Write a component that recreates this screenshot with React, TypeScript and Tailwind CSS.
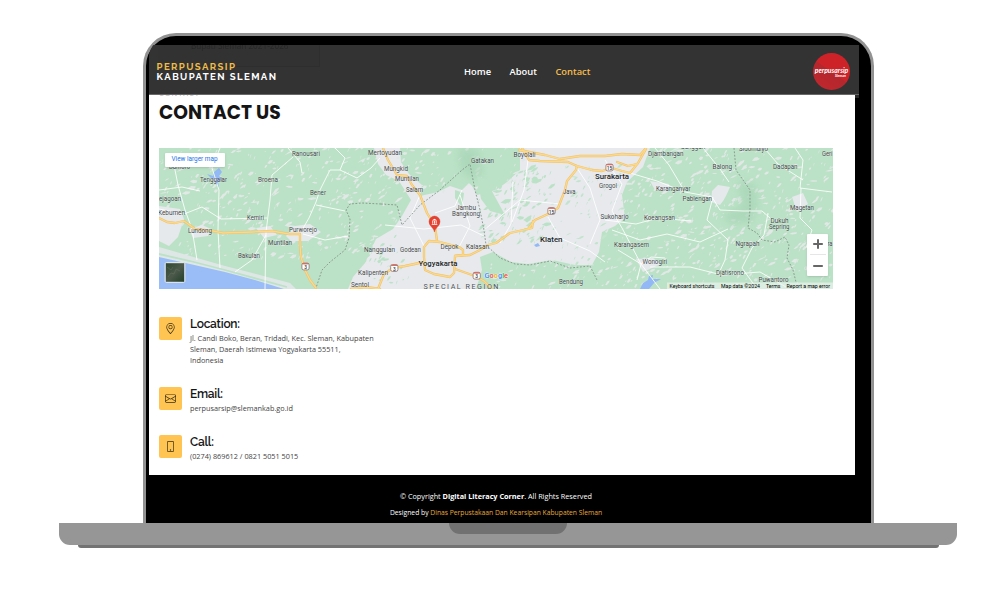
import type { ReactNode } from "react";
import { BsEnvelope, BsGeoAlt, BsPhone } from "react-icons/bs";

type Label = [text: string, x: number, y: number, width: number];

const labels: Label[] = [
  ["Ranousari", 292, 156, 28], ["Mertoyudan", 368, 155, 34], ["Danforo", 169, 169, 21],
  ["Tenggalar", 200, 182, 27], ["Broena", 258, 181.5, 20], ["Bener", 310, 194.5, 16],
  ["ejagoan", 159, 201, 22], ["Kebumen", 158, 215, 27], ["Kemiri", 247, 220, 17],
  ["Lundong", 188, 233, 24], ["Purworejo", 289, 231.5, 28], ["Muntilan", 268, 245, 24],
  ["Bakulan", 238, 258, 22], ["Nanggulan", 364, 252, 31], ["Kalipenten", 358, 275, 30],
  ["Sentol", 351, 287, 18], ["Mungkid", 384, 170.5, 24], ["Muntilan", 395, 180.5, 24],
  ["Salam", 406, 191.5, 17], ["Gatakan", 471, 162.5, 23], ["Jambu", 456, 210, 20],
  ["Bangkong", 452, 216, 28], ["Godean", 400, 252, 21], ["Depok", 440.5, 249, 18],
  ["Kalasan", 466, 249, 23], ["Bendung", 559, 284, 24], ["Boyolali", 513.5, 156.5, 22],
  ["Java", 563, 193.5, 12.5], ["Grogol", 599, 188, 18], ["Sukoharjo", 600.5, 219, 28],
  ["Djambangan", 648, 156, 35.5], ["Sanggan", 681, 149, 24], ["Sidomulyo", 739, 150.5, 29],
  ["Balong", 712.5, 169, 19.5], ["Dadapan", 773, 169, 24.5], ["Geri", 822, 156, 10.5],
  ["Karanganyar", 656, 191, 34.5], ["Pablengan", 682.5, 201, 29.5], ["Koeangsan", 644, 220, 31],
  ["Magetan", 790, 209.5, 24], ["Dukuh", 770.5, 222.5, 18], ["Sepring", 769, 229, 20.5],
  ["Karangasem", 614, 247, 35], ["Ngrapah", 735.5, 246, 24], ["ra", 827.5, 246, 5],
  ["Wonogiri", 642.5, 264, 24.5], ["Djatisrono", 716, 275, 28], ["Puwantoro", 758.5, 281.5, 30],
];

function seeded(seed: number) {
  let s = seed;
  return () => {
    s = (s * 16807) % 2147483647;
    return s / 2147483647;
  };
}

function speckles(seed: number, count: number, x: number, y: number, w: number, h: number, size: number) {
  const r = seeded(seed);
  let d = "";
  for (let i = 0; i < count; i++) {
    const cx = x + r() * w;
    const cy = y + r() * h;
    const a = size * (0.3 + r() * r() * 2.2);
    const b = size * (0.2 + r() * 0.7);
    const k = r() - 0.3;
    d += `M${cx.toFixed(1)} ${cy.toFixed(1)}l${(a * 0.5).toFixed(1)} ${(-b * 0.9 - a * k * 0.5).toFixed(1)} ${(a * 0.6).toFixed(1)} ${(-a * k * 0.4).toFixed(1)} ${(-b * 0.3).toFixed(1)} ${(b * 0.8).toFixed(1)} ${(-a * 0.5).toFixed(1)} ${(b * 0.5 + a * k * 0.4).toFixed(1)}z`;
  }
  return d;
}

const towns = speckles(77, 420, 159, 148, 240, 112, 3.6);
const eastTowns = speckles(913, 560, 600, 148, 232, 141, 3.6);
const northTowns = speckles(421, 90, 385, 148, 150, 45, 3.4);
const southTowns = speckles(55, 50, 490, 262, 110, 27, 3.2);
const woods = speckles(333, 150, 478, 170, 75, 75, 4);
const westWoods = speckles(654, 55, 350, 225, 60, 60, 3.4);
const eastWoods = speckles(871, 70, 560, 165, 62, 100, 3.4);

const highways = [
  "M159 218L167 222 175 223 184 221 195 229 213 231 223 233 252 232 272 231 289 234 300 234 300 245 301 257 305 270 310 280 316 288",
  "M383 148L388 160 397 175 407 176 412 185 420 195 427 213 435 226 437 241",
  "M424 257L424 247 429 241 440 242 459 247 463 250 463 255 455 256 454 273 450 277 434 274 425 270 424 257",
  "M455 256L470 255 480 250 488 245 496 243 510 233 528 229 535 220 548 214 558 208 565 190 567 181 576 170 577 166 568 162 540 161 529 160 522 148",
  "M528 229L532 228 533 221",
  "M424 262L405 266 393 268 384 274 378 289",
  "M455 269L475 276 484 281 492 289",
  "M519 150L545 155 560 159 580 156 605 156 622 154 640 155 646 148",
  "M577 166L592 170 602 171 612 168 622 171 630 173 638 163 646 149",
  "M617 162L628 166 637 164",
  "M351 289L366 287 380 289",
];

const roads =
  "M293 157L272 175 270 200 266 232 265 289M288 148L300 162 302 173M335 148L345 158 340 170 330 170 320 190 316 202 309 218 302 230M340 170L357 178 371 168 380 158M316 205L345 211M303 234L325 240 348 236M220 148L212 168 219 190 218 230 220 268M174 165L178 185 185 210 192 229 197 260M159 209L184 214 202 207 221 219 267 218M266 235L252 260 235 272M159 190L182 187 200 191M435 213L455 206 462 190M420 195L410 218 424 246M385 225L424 229 461 225 484 236M460 195L470 226 459 247M484 230L520 200 560 204M500 243L511 224 513 182M528 160L524 190 512 222M548 217L560 238 590 251 605 262M577 168L590 188 600 220 590 244M605 160L622 184 612 211 622 228 641 264 660 289M630 173L657 181 685 192 712 197 720 210 743 211 762 211 770 218M655 148L669 165 685 192M703 148L720 169 729 182M795 148L803 160 800 188 832 192M801 188L800 218 812 230 806 248M641 264L637 280M650 267L690 267 722 275 760 272 786 287M755 286L742 268 752 248 764 235 768 213M612 230L640 240 667 234 700 242 728 229M618 250L641 264 651 257 665 258M605 220L636 224 658 218 691 221M765 149L778 164 803 180M713 197L707 220 728 240 725 260 718 275";

const borders = [
  "M381 204L362 203 350 204 346 210 350 219 349 238 345 250 330 262 322 270 316 288",
  "M381 204L397 205 402 225 420 205 440 190 462 170 470 164 475 190 480 210 484 230 486 245 500 258 515 264 530 265 550 261 570 268 590 266 597 280",
  "M734 148L736 170 750 190 750 210 748 228 757 233 762 240 775 242 785 237 789 245 787 258 793 270 796 282",
];

function Shield({ x, y, text }: { x: number; y: number; text: string }) {
  return (
    <g>
      <rect x={x - 3.6} y={y - 3.4} width="7.2" height="6.8" rx="1.8" fill="#fff" stroke="#8b6d69" strokeWidth=".8" />
      <path d={`M${x - 3} ${y - 2.7}h6`} stroke="#dc5548" strokeWidth="1.1" />
      <text x={x} y={y + 2.6} textAnchor="middle" fontSize="4.8" fontWeight="500" fill="#333">{text}</text>
    </g>
  );
}

function MapDrawing() {
  return (
    <svg viewBox="159 148 674 141" className="block h-full w-full font-['Roboto',sans-serif]">
      <defs>
        <filter id="soft" x="-20%" y="-20%" width="140%" height="140%">
          <feGaussianBlur stdDeviation="4" />
        </filter>
        <linearGradient id="sat" x1="0" y1="0" x2="1" y2="1">
          <stop offset="0" stopColor="#2c4630" />
          <stop offset=".5" stopColor="#4c594b" />
          <stop offset="1" stopColor="#203e27" />
        </linearGradient>
      </defs>
      <rect x="159" y="148" width="674" height="141" fill="#bbe2c6" />
      <path d={towns} fill="#e1e8e6" />
      <path d={eastTowns} fill="#e1e8e6" />
      <path d="M374 148L400 148 401 162 409 174 422 185 420 196 438 192 450 186 462 190 470 182 477 195 496 190 507 182 520 170 520 148 650 148 643 167 627 182 622 195 625 218 615 226 602 232 599 252 592 265 575 265 552 260 528 264 511 262 493 252 480 257 482 270 476 289 348 289 353 277 365 263 376 239 393 229 402 216 411 200 399 181 386 175 378 164Z" fill="#e7e9ed" />
      <path d="M159 206L180 209 184 219 178 237 169 246 159 241ZM286 236L295 226 310 224 321 232 308 241 291 241ZM189 229L202 225 211 229 208 236 193 238ZM256 228L270 226 277 235 264 238ZM650 181L669 184 670 191 655 190ZM712 191L718 185 730 187 726 196 720 205 711 202ZM792 197L803 193 808 204 797 212ZM636 259L653 258 661 264 643 272Z" fill="#e6e9ec" />
      <path d="M401 148L520 148 516 160 506 174 491 187 477 190 463 178 450 181 435 185 420 182 414 170 401 162Z" fill="#bbe2c6" />
      <path d={northTowns} fill="#e2e8e6" />
      <path d={woods} fill="#bbe2c6" />
      <path d={westWoods} fill="#bbe2c6" />
      <path d={eastWoods} fill="#c2e4cc" />
      <path d={southTowns} fill="#e2e8e6" />
      <path d="M458 148L478 150 483 176 471 179 461 170Z" fill="#a9d5b7" filter="url(#soft)" opacity=".8" />
      <path d="M737 180L756 185 757 206 752 222 730 224 722 215 743 206Z" fill="#a9d6b7" filter="url(#soft)" opacity=".8" />
      <path d="M477 176L487 181 494 195 505 215 490 211 481 199ZM455 190L464 193 462 207 455 198Z" fill="#bbe2c6" />

      <path d="M159 247L190 256 225 266 290 283 296 289 159 289Z" fill="#dfe7e6" />
      <path d="M159 254L190 261 225 270 287 287" stroke="#bbe2c6" strokeWidth="1.8" fill="none" />
      <path d="M159 257L190 264 225 272 255 280 284 289 159 289Z" fill="#9abdf8" />
      <path d="M214 172L219 168 222 172 219 176 224 180 218 181 219 188 214 181 207 174 213 176ZM534 245L538 243 540 246 536 247ZM640 289L643 283 648 280 649 276 653 275 652 279 661 279 654 283 649 289Z" fill="#92b8f5" />

      <path d={roads} fill="none" stroke="#fff" strokeWidth="1" strokeOpacity=".85" strokeLinejoin="round" />
      <g fill="none" stroke="#829488" strokeWidth=".9" strokeDasharray="1.8 1.6">
        {borders.map((d) => <path key={d} d={d} />)}
      </g>
      <g fill="none" strokeLinejoin="round" strokeLinecap="round">
        {highways.map((d) => <path key={d} d={d} stroke="#efc069" strokeWidth="2.3" />)}
        {highways.map((d) => <path key={d} d={d} stroke="#fcd889" strokeWidth="1.3" />)}
      </g>
      <Shield x={305.5} y={266.5} text="3" />
      <Shield x={394.3} y={268} text="3" />
      <Shield x={476.7} y={275.7} text="3" />
      <Shield x={551.5} y={211} text="15" />
      <Shield x={609.5} y={167.5} text="15" />

      <g fontSize="6.3" fill="#43484c" stroke="#fff" strokeWidth=".7" strokeOpacity=".45" paintOrder="stroke" strokeLinejoin="round">
        {labels.map(([text, x, y, width]) => (
          <text key={`${text}${x}`} x={x} y={y} textLength={width} lengthAdjust="spacingAndGlyphs">{text}</text>
        ))}
        <g fontSize="7.6" fontWeight="500" fill="#202326">
          <text x="418.500" y="265.500" textLength="39" lengthAdjust="spacingAndGlyphs">Yogyakarta</text>
          <text x="540" y="242" textLength="22.500" lengthAdjust="spacingAndGlyphs">Klaten</text>
          <text x="595" y="179" textLength="34" lengthAdjust="spacingAndGlyphs">Surakarta</text>
        </g>
        <text x="423.500" y="289.200" fontSize="7.2" textLength="75" fill="#4b5154">SPECIAL REGION</text>
      </g>

      <path d="M434.500 232C433.800 227.500 429 226.500 429 221.600A5.500 5.500 0 0 1 440 221.600C440 226.500 435.200 227.500 434.500 232Z" fill="#e8402f" stroke="#c53a2c" strokeWidth=".4" />
      <path d="M431.700 220.500L434.500 218.800 437.300 220.500ZM432.300 221h.9v2.700h-.9zM434 221h.9v2.700h-.9zM435.700 221h.9v2.700h-.9zM431.700 224h5.600v.8h-5.600z" fill="#fff" />
      <text x="484.500" y="278" fontSize="8" fontWeight="500" textLength="23.500" lengthAdjust="spacingAndGlyphs" stroke="#fff" strokeWidth=".6" paintOrder="stroke">
        <tspan fill="#4285f4">G</tspan><tspan fill="#ea4335">o</tspan><tspan fill="#f0ad00">o</tspan><tspan fill="#4285f4">g</tspan><tspan fill="#34a853">l</tspan><tspan fill="#ea4335">e</tspan>
      </text>

      <path d="M667 282.500h166v6.500H667z" fill="#eef5f0" fillOpacity=".65" />
      <g fontSize="5.500" fill="#000">
        <text x="669.500" y="287.600" textLength="45" lengthAdjust="spacingAndGlyphs">Keyboard shortcuts</text>
        <text x="721" y="287.600" textLength="39" lengthAdjust="spacingAndGlyphs">Map data ©2024</text>
        <text x="766" y="287.600" textLength="14.500" lengthAdjust="spacingAndGlyphs">Terms</text>
        <text x="786.500" y="287.600" textLength="43.500" lengthAdjust="spacingAndGlyphs">Report a map error</text>
      </g>
      <rect x="165.200" y="262.700" width="19.600" height="19.600" rx="1" fill="url(#sat)" stroke="#f1f4f2" strokeWidth="1" />
      <path d="M168 277l3-4 3 1 2-5 4 2M167 267l4 3 2-3" stroke="#708073" strokeWidth=".8" fill="none" opacity=".4" />
    </svg>
  );
}

function Info({ icon, title, className, children }: { icon: ReactNode; title: string; className: string; children: ReactNode }) {
  return (
    <div className={`flex items-start gap-2 ${className}`}>
      <div className="flex h-[23px] w-[23px] shrink-0 items-center justify-center rounded-[2px] bg-[#ffc451] text-[11px] text-[#3a2f18]">{icon}</div>
      <div>
        <h3 className="font-['Raleway','Lato',sans-serif] text-[12px] leading-[14px] font-semibold tracking-[-0.25px] text-[#151515]">{title}</h3>
        <p className="mt-[2px] font-['Open_Sans',sans-serif] text-[7.3px] leading-[10.8px] whitespace-nowrap text-[#444]">{children}</p>
      </div>
    </div>
  );
}

export default function App() {
  return (
    <div className="flex h-[591px] w-[1004px] flex-col overflow-hidden bg-white pt-[33px]">
      <div className="ml-[143px] h-[490px] w-[731px] rounded-t-[33px] border-x-[3px] border-t-[3px] border-[#929292] bg-black">
        <div className="ml-[3px] flex h-[487px] w-[710px] flex-col overflow-hidden rounded-tl-[22px] pt-[9px]">
          <header className="relative z-10 flex h-[50px] w-full shrink-0 items-center border-b border-[#686868] bg-[#333] shadow-[0_3px_0_#292929]">
            <div className="pointer-events-none absolute top-0 left-[9px] h-[22px] w-[162px] overflow-hidden border-r border-b border-[#2e2e2e] bg-[#323232]">
              <p className="absolute -top-[5px] left-[33px] font-['Open_Sans',sans-serif] text-[8.2px] leading-[12px] whitespace-nowrap text-[#222] opacity-70">Bupati Sleman 2021-2026</p>
            </div>
            <div className="relative mt-[4px] ml-[7.5px] w-[307.5px] font-['Raleway','Lato',sans-serif] text-[9.6px] leading-[9.6px] font-bold tracking-[1.4px] text-white">
              <div className="text-[#eebc49]">PERPUSARSIP</div>
              <div>KABUPATEN SLEMAN</div>
            </div>
            <nav className="mt-[4px] flex flex-1 gap-[18.500px] font-['Open_Sans',sans-serif] text-[9.35px] leading-3 font-semibold text-white">
              <span>Home</span>
              <span>About</span>
              <span className="text-[#f5bd4d]">Contact</span>
            </nav>
            <div className="relative mt-[4px] mr-[9px] flex h-[37px] w-[37px] flex-col items-center justify-center overflow-hidden rounded-full bg-[linear-gradient(215deg,#ce2229_0%,#ce2229_50%,#b3272d_51%,#c3272d_100%)] font-['Lato',sans-serif] text-white italic">
              <span className="text-[6.8px] leading-[7px] font-bold">perpusarsip</span>
              <span className="mr-1 self-end text-[3.6px] leading-[3px] font-bold">Sleman</span>
            </div>
          </header>
          <main className="relative z-20 h-[380px] w-[706px] shrink-0 overflow-hidden bg-white px-[10px]">
            <p className="-mt-[6px] h-[9px] font-['Open_Sans',sans-serif] text-[7.5px] leading-[9px] tracking-[1px] text-[#aaa]">CONTACT</p>
            <h2 className="mt-[4px] h-[22px] font-['Poppins','Inter',sans-serif] text-[18.7px] leading-[22px] font-bold whitespace-nowrap text-[#151515]">CONTACT US</h2>
            <div className="relative mt-[24px] h-[141px] w-[674px] overflow-hidden">
              <MapDrawing />
              <div className="absolute top-[5px] left-[5.500px] flex h-[14px] w-[60px] items-center justify-center rounded-[1px] bg-white font-['Roboto',sans-serif] text-[6.4px] whitespace-nowrap text-[#1a73e8] shadow-sm">View larger map</div>
              <div className="absolute top-[86px] left-[648px] flex h-[42px] w-[21px] flex-col items-center rounded-[1px] bg-white shadow-sm">
                <div className="flex h-[21px] w-[16px] items-center justify-center border-b border-[#e6e6e6]">
                  <svg viewBox="0 0 10 10" className="h-[10px] w-[10px]"><path d="M5 .2v9.600M.2 5h9.600" stroke="#666" strokeWidth="2" /></svg>
                </div>
                <div className="flex h-[21px] items-center">
                  <svg viewBox="0 0 10 10" className="h-[10px] w-[10px]"><path d="M.2 5h9.600" stroke="#666" strokeWidth="2" /></svg>
                </div>
              </div>
            </div>
            <div className="pt-[28px]">
              <Info icon={<BsGeoAlt />} title="Location:" className="h-[70px]">
                Jl. Candi Boko, Beran, Tridadi, Kec. Sleman, Kabupaten<br />Sleman, Daerah Istimewa Yogyakarta 55511,<br />Indonesia
              </Info>
              <Info icon={<BsEnvelope />} title="Email:" className="h-[48px]">perpusarsip@slemankab.go.id</Info>
              <Info icon={<BsPhone />} title="Call:" className="h-[30px]">(0274) 869612 / 0821 5051 5015</Info>
            </div>
          </main>
          <footer className="w-[694px] pt-[13px] text-center font-['Open_Sans',sans-serif] leading-[16.500px] text-white">
            <p className="text-[7.27px]">© Copyright <strong>Digital Literacy Corner</strong>. All Rights Reserved</p>
            <p className="text-[6.75px]">Designed by <span className="text-[#e5a93e]">Dinas Perpustakaan Dan Kearsipan Kabupaten Sleman</span></p>
          </footer>
        </div>
      </div>
      <div className="ml-[59px] flex h-[22px] w-[898px] justify-center rounded-b-[11px] bg-[#969696]">
        <div className="h-[11px] w-[118px] rounded-b-[11px] bg-[#717171]" />
      </div>
      <div className="ml-[78px] h-[3px] w-[861px] rounded-b-[3px] bg-[#737373]" />
    </div>
  );
}
